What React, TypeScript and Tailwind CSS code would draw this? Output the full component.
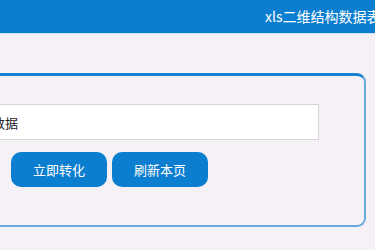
export default function App() {
  return (
    <div
      className="h-[250px] w-[375px] overflow-hidden bg-[#f5f1f6]"
      style={{ fontFamily: '"Noto Sans CJK SC", "Noto Sans", sans-serif' }}
    >
      <header className="flex h-[34px] items-center overflow-hidden whitespace-nowrap border-b border-[#cfe4f6] bg-[#0b7ecf] pl-[265px] text-[14px] text-white">
        xls二维结构数据表格转换工具
      </header>

      <div className="ml-[-120px] mr-[9px] mt-[39px] rounded-[9px] border-2 border-t-[3px] border-[#6aaadb] border-t-[#1883d0] pb-[38px] pl-[10px] pr-[45px] pt-[28px]">
        <input
          readOnly
          value="请输入二维结构数据"
          className="block h-[36px] w-full border border-[#d6d6d6] bg-white px-[8px] text-[13px] text-[#222] outline-none"
        />
        <div className="ml-[119px] mt-[12px] flex gap-[5px]">
          <button className="h-[35px] w-[96px] rounded-[10px] bg-[#0b7ecf] text-[13px] text-white">
            立即转化
          </button>
          <button className="h-[35px] w-[96px] rounded-[10px] bg-[#0b7ecf] text-[13px] text-white">
            刷新本页
          </button>
        </div>
      </div>
    </div>
  );
}
